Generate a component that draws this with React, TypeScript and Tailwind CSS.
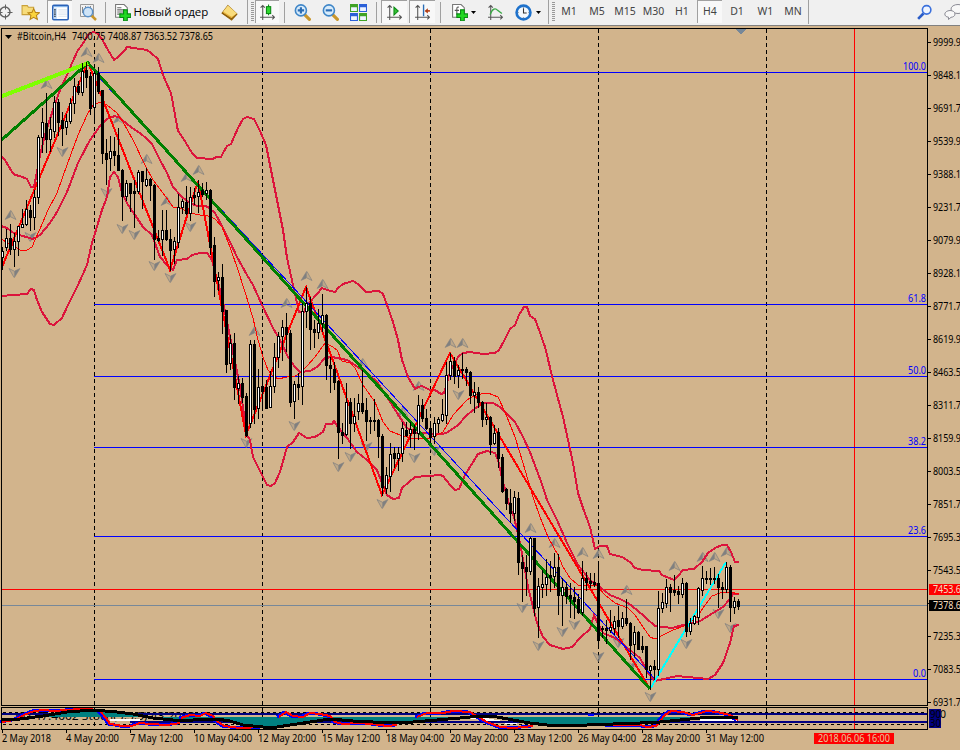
import type { ReactNode } from 'react';

// [high, body top, body bottom, low, bullish], one bar every 4px starting at x = 2
const bars: number[][] = [
  [247,251,257,269,1],[229,238,247,250,1],[224,238,249,254,0],[233,241,249,266,1],[226,226,241,255,1],
  [209,224,227,227,1],[200,209,224,225,1],[205,210,217,230,0],[190,197,217,229,1],[135,137,197,203,1],
  [108,122,137,152,1],[93,123,139,152,0],[117,129,139,151,1],[96,102,131,137,1],[99,102,122,135,0],
  [112,120,128,145,0],[114,121,127,134,1],[98,103,121,123,1],[78,86,103,113,1],[81,86,92,94,0],
  [63,71,92,95,1],[62,70,77,87,0],[72,76,108,114,0],[71,73,107,121,1],[67,73,91,93,0],
  [90,90,153,163,0],[139,153,159,184,0],[136,151,158,170,1],[137,151,155,165,0],[128,155,170,170,0],
  [169,170,196,220,0],[180,183,196,200,1],[183,183,193,211,0],[180,191,193,227,0],[170,172,191,193,1],
  [171,171,181,208,0],[168,179,185,186,1],[178,179,185,200,0],[184,185,239,259,0],[230,238,240,241,0],
  [210,230,239,255,1],[210,230,239,240,0],[229,239,250,270,0],[237,241,249,263,1],[194,207,242,247,1],
  [199,201,207,213,1],[186,202,213,214,0],[187,197,213,220,1],[188,195,197,204,0],[180,192,196,212,1],
  [183,190,194,196,0],[182,190,193,199,1],[189,190,247,254,0],[237,245,281,296,0],[272,277,280,290,1],
  [264,277,311,333,0],[310,310,364,372,0],[335,343,363,369,1],[333,343,387,399,0],[376,383,388,403,1],
  [378,383,397,402,0],[393,396,435,436,0],[340,344,423,427,1],[340,344,409,423,0],[369,387,408,418,1],
  [362,386,391,410,0],[380,387,408,408,0],[371,386,407,407,1],[343,357,386,392,1],[332,336,357,367,1],
  [320,327,336,360,1],[313,327,334,351,0],[330,333,402,406,0],[381,384,401,418,1],[373,384,387,399,0],
  [303,311,386,404,1],[287,303,311,327,1],[297,303,329,349,0],[320,329,332,347,0],[309,323,332,338,1],
  [294,315,323,331,1],[314,315,365,379,0],[357,365,368,392,0],[362,369,382,389,0],[380,381,432,458,0],
  [423,432,435,443,0],[383,402,434,435,1],[398,402,423,448,0],[398,416,423,431,1],[394,403,411,419,1],
  [370,403,411,413,0],[398,410,421,440,0],[417,420,421,433,0],[399,420,421,430,0],[419,420,436,457,0],
  [434,436,487,495,0],[467,475,488,493,1],[443,454,476,491,1],[447,453,458,467,0],[447,453,458,470,1],
  [422,428,453,461,1],[422,430,435,436,0],[422,429,433,447,1],[425,429,433,449,0],[395,405,433,439,1],
  [399,405,418,421,0],[409,418,428,429,0],[423,428,437,442,0],[417,423,436,443,1],[417,419,423,432,1],
  [399,414,420,421,1],[362,375,415,423,1],[353,361,375,379,1],[357,361,376,383,0],[365,370,375,387,1],
  [353,369,370,378,0],[367,369,372,385,0],[371,372,395,403,0],[382,392,395,412,1],[387,392,402,407,0],
  [401,402,419,426,0],[403,417,419,424,1],[416,417,444,454,0],[425,433,443,444,1],[428,432,458,467,0],
  [454,457,491,492,0],[488,489,503,509,0],[489,503,513,522,0],[491,497,513,520,1],[492,498,562,574,0],
  [555,562,568,601,0],[555,567,571,595,0],[537,538,571,574,1],[538,538,608,615,0],[578,586,607,637,1],
  [570,584,587,597,1],[559,577,584,595,1],[561,575,577,591,0],[553,567,576,587,1],[554,567,595,614,0],
  [578,587,595,625,1],[582,587,596,603,0],[583,595,598,617,0],[587,597,601,618,0],[594,599,612,613,0],
  [561,578,612,615,1],[572,578,582,590,0],[573,581,583,587,0],[573,582,584,586,0],[563,583,640,648,0],
  [626,628,629,637,0],[620,628,630,643,0],[610,627,630,632,1],[616,621,628,634,1],[606,620,626,637,0],
  [612,618,626,628,1],[599,618,623,625,0],[622,623,645,659,0],[626,632,644,656,1],[631,632,649,649,0],
  [636,646,649,652,0],[646,646,669,677,0],[665,666,670,689,1],[660,666,669,679,0],[591,608,669,675,1],
  [593,602,608,612,1],[579,587,603,607,1],[584,587,592,611,0],[575,590,592,595,0],[586,591,594,603,0],
  [578,583,594,597,1],[582,583,631,636,0],[618,623,631,634,1],[615,616,623,624,1],[587,588,617,624,1],
  [566,578,590,595,1],[571,578,579,583,0],[568,578,579,584,0],[567,578,579,583,0],[574,578,587,607,0],
  [582,587,589,598,0],[562,567,589,592,1],[565,567,607,621,0],[597,601,607,613,1],[599,601,606,609,0],
];

const upperBand = '0,155 5,160 12,172 15,175 20,176 27,179 31,187 34,187 36,177 40,155 46,131 54,107 60,90 68,73 72,63 78,50 82,45 88,35 93,32 97,33 102,39 108,50 114,60 118,57 125,50 127,47 134,48 147,50 151,53 158,59 163,75 166,82 171,93 175,115 178,131 183,138 192,153 197,158 213,159 216,157 221,157 223,153 227,146 231,144 238,128 243,119 247,117 254,119 260,131 266,145 275,190 283,230 287,258 293,285 299,312 304,312 307,305 310,302 317,294 322,288 327,290 335,292 338,288 343,284 353,281 358,284 366,292 379,291 383,294 387,305 393,322 398,340 402,360 408,377 415,389 418,387 422,386 430,390 435,390 441,394 444,393 450,372 458,357 463,353 470,352 483,354 495,353 499,350 504,341 510,329 515,325 519,315 524,307 527,307 530,316 535,319 538,327 545,347 553,380 563,417 573,463 578,493 583,508 590,527 595,549 600,546 607,546 610,554 622,557 630,562 635,568 643,570 659,571 662,575 674,580 678,576 683,570 694,569 702,562 708,553 715,548 722,545 727,545 731,552 735,562 739,562';
const middleBand = '1,226 7,228 12,232 22,236 27,237 32,239 35,238 40,235 50,223 57,212 67,192 78,163 90,140 100,126 107,119 115,116 120,118 127,124 135,130 140,133 147,139 152,144 160,160 167,173 173,187 182,197 190,203 197,206 205,206 208,207 215,213 223,228 230,242 237,257 247,275 253,285 262,305 273,328 280,340 288,357 295,367 300,372 310,371 317,367 325,358 332,357 347,360 358,367 367,373 377,382 387,397 397,413 407,428 415,433 443,434 448,432 458,425 467,415 477,407 485,403 493,403 500,407 515,422 523,437 530,452 543,487 547,500 557,520 567,543 578,565 590,580 600,587 610,595 620,599 628,603 637,610 645,617 655,626 672,628 683,625 700,621 713,613 723,607 730,599 733,594 739,594';
const lowerBand = '1,296 27,294 31,289 34,290 37,300 42,312 50,324 54,325 62,318 68,305 78,285 87,265 92,243 102,210 107,197 110,177 114,172 118,177 122,193 128,205 135,215 143,227 152,235 160,257 167,265 173,270 177,260 187,259 192,255 200,253 207,253 212,260 215,272 222,297 230,337 240,387 247,435 250,440 253,457 262,475 267,485 271,486 275,483 280,472 287,447 293,442 299,433 307,438 315,437 323,432 326,424 332,424 334,421 338,427 347,438 357,452 367,460 377,470 382,483 387,495 393,499 399,498 402,488 415,477 440,475 443,476 450,485 455,490 459,489 465,475 478,454 487,451 495,453 498,460 503,482 510,507 514,517 520,543 528,587 537,623 543,637 550,645 563,649 572,647 580,638 590,629 594,615 597,622 603,633 615,638 630,650 640,658 648,673 655,681 677,676 708,679 715,675 723,663 730,643 734,626 739,625';
const fastMa = '1,239 10,244 20,250 27,250 32,247 35,240 40,229 48,210 57,193 67,165 78,135 88,113 93,105 100,102 107,105 117,113 123,122 133,140 145,165 153,180 163,193 173,207 182,209 190,213 200,215 208,216 215,219 222,227 230,247 238,270 245,292 253,318 258,340 263,357 268,370 272,375 278,379 287,377 295,376 300,373 307,366 315,357 325,343 333,347 337,350 342,361 350,363 355,368 363,385 375,402 383,422 390,431 400,435 415,439 430,438 443,432 453,415 467,400 475,395 488,393 498,397 505,412 515,437 523,463 533,497 540,517 548,537 558,555 563,567 570,578 578,585 597,586 605,595 615,603 628,608 635,615 643,627 650,637 655,639 663,635 673,630 687,625 697,617 703,608 712,596 720,593 730,592 739,594';

const upFractals = [[46,79],[10,210],[86,47],[98,53],[118,114],[146,154],[166,196],[186,172],[198,165],[254,326],[286,298],[306,271],[322,279],[362,358],[402,407],[418,381],[450,338],[462,338],[530,523],[554,538],[582,547],[598,549],[626,585],[674,561],[702,552],[714,552],[726,547]];
const downFractals = [[62,157],[30,242],[14,278],[106,198],[122,234],[134,240],[154,271],[170,283],[190,232],[246,448],[294,431],[338,472],[350,462],[366,452],[382,509],[414,463],[434,456],[458,400],[522,613],[538,651],[562,637],[574,630],[598,662],[618,648],[631,671],[650,702],[686,649],[718,619],[730,633]];

const levels: [string, number][] = [['100.0', 72], ['61.8', 304], ['50.0', 376], ['38.2', 447], ['23.6', 536], ['0.0', 679]];
const prices = ['9999.9', '9848.1', '9691.7', '9539.9', '9388.1', '9231.7', '9079.9', '8928.1', '8771.7', '8619.9', '8463.5', '8311.7', '8159.9', '8003.5', '7851.7', '7695.3', '7543.5', '', '7235.3', '7083.5', '6931.7'];
const dates: [string, number][] = [['2 May 2018', 49], ['4 May 20:00', 53], ['7 May 12:00', 53], ['10 May 04:00', 58], ['12 May 20:00', 58], ['15 May 12:00', 58], ['18 May 04:00', 58], ['20 May 20:00', 58], ['23 May 12:00', 58], ['26 May 04:00', 58], ['28 May 20:00', 58], ['31 May 12:00', 58]];

const signal = '2,719 20,719 43,716 67,712 93,710 117,712 133,714 153,718 173,720 193,720 217,719 230,721 243,725 263,727 277,727 290,725 310,722 330,719 353,721 373,722 413,722 437,720 460,718 480,716 497,717 513,720 530,723 547,725 587,725 613,724 640,723 660,722 680,720 700,718 720,717 738,717';
const stoch = [
  '2,722 14,720 24,715 34,711 44,710 54,711 67,710 80,709 93,709',
  '100,711 106,718 110,724 117,725 122,726 132,726 140,723 150,724 167,725 180,723',
  '181,718 190,715 200,716 206,713 213,716 217,721 224,726 240,728 262,727',
  '279,717 286,712 293,716 303,717 310,713 320,714 330,716 335,722 343,724 357,723 373,724 387,726 397,725',
  '417,717 427,713 443,713 453,711 470,712 480,718 487,722 500,727 513,728 533,726',
  '607,725 625,725 640,725 647,727 656,726 665,715 671,711 683,712 693,715 707,711 717,712 730,715 738,720',
];

const font = '"Noto Sans", "DejaVu Sans", sans-serif';

function Label({ x, y, w, fill = '#000', children }: { x: number; y: number; w: number; fill?: string; children: string }) {
  return (
    <text x={x} y={y} textLength={w} lengthAdjust="spacingAndGlyphs" fill={fill} fontSize="11">{children}</text>
  );
}

function Chart() {
  return (
    <svg className="block" width="960" height="724" viewBox="0 26 960 724" fontFamily={font}>
      <g shapeRendering="crispEdges" fill="none">
        <g stroke="#000" strokeDasharray="4 3">
          {[94, 262, 430, 598, 766].map((x) => <path key={x} d={`M${x}.5 29V705M${x}.5 708V729`} />)}
        </g>
        <path d="M735 29h11l-5.500 5.500z" fill="#778899" />
        <path d="M2 605.500H927" stroke="#778899" />
        <path d="M2 589.500H927" stroke="#f00" />
        <path d="M854.500 29V705M854.500 708V729" stroke="#f00" />
        {levels.map(([name, y]) => <path key={name} d={`M94 ${y}.5H927`} stroke="#00f" />)}
      </g>

      <g fill="#808080" stroke="#808080">
        {upFractals.map(([x, y]) => (
          <g key={`${x}-${y}`} transform={`translate(${x + 0.5} ${y})`}>
            <path d="M0 .5L-5.500 9.500L0 7z" strokeWidth=".5" />
            <path d="M.5 .5L5.500 9.500L.5 7" fillOpacity=".25" strokeOpacity=".8" strokeWidth=".9" />
          </g>
        ))}
        {downFractals.map(([x, y]) => (
          <g key={`${x}-${y}`} transform={`translate(${x + 0.5} ${y})`}>
            <path d="M0 -.5L5.500 -9.500L0 -7z" strokeWidth=".5" />
            <path d="M-.5 -.5L-5.500 -9.500L-.5 -7" fillOpacity=".25" strokeOpacity=".8" strokeWidth=".9" />
          </g>
        ))}
      </g>

      <svg x="2" y="29" width="925" height="676" viewBox="2 29 925 676">
        <g shapeRendering="crispEdges" fill="none">
          <g stroke="#dc143c" strokeWidth="2">
            <polyline points={upperBand} />
            <polyline points={middleBand} />
            <polyline points={lowerBand} />
          </g>
          <polyline points={fastMa} stroke="#f00" />
          <polyline points="2,267 88,62 170,270 198,181 246,435 306,287 382,495 450,353 650,689" stroke="#f00" strokeWidth="2" />
          <path d="M650 689L726 562" stroke="#0ff" strokeWidth="2" />
          <path d="M94 72L655 679" stroke="#00f" />
          <path d="M1 140.500L88 63L650 689" stroke="#008000" strokeWidth="3" />
          <path d="M1 96.500L88 63" stroke="#7fff00" strokeWidth="4" />
        </g>
        <g shapeRendering="crispEdges">
          {bars.map(([high, top, bottom, low, up], i) => {
            const x = 2 + i * 4;
            return (
              <g key={i}>
                <rect x={x} y={high} width="1" height={low - high + 1} />
                <rect x={x - 1} y={top} width="3" height={bottom - top + 1} />
                {up === 1 && bottom - top > 1 && <rect x={x} y={top + 1} width="1" height={bottom - top - 1} fill="#fff" />}
              </g>
            );
          })}
        </g>
      </svg>

      {/* oscillator pane */}
      <Label x={15} y={720} w={180}>KU 47.4002  Stoch(5,3,3) 43.2012</Label>
      <g shapeRendering="crispEdges" fill="none">
        <path d="M110 719h30v2h-30zM468 718h18l34 6h-12z" fill="#fff" />
        <path d="M2 714H927M130 722H927" stroke="#000080" strokeWidth="2" />
        <path d="M3 712.500H927M3 724.500H927" stroke="#000" strokeDasharray="3 3" />
        <path d={`M${signal} 738,717 40,717z`} fill="#008080" />
        <path d="M700 719h38v2h-38z" fill="#fff" />
        {stoch.map((points) => (
          <g key={points}>
            <polyline points={points} stroke="#00f" strokeWidth="3" transform="translate(-2 0)" />
            <polyline points={points} stroke="#f00" strokeWidth="2" />
          </g>
        ))}
        <polyline points={signal} stroke="#000" strokeWidth="3" />
        <path d="M588 716h6v-2h-6z" fill="#00f" />
        <path d="M1.500 705.500V28.500H927.500V705.500zM1.500 729.500V707.500H927.500V729.500z" stroke="#000" />
        <path d={prices.map((_, i) => `M928 ${42.5 + i * 33}h3`).join('')} stroke="#000" />
        <path d={dates.map((_, i) => `M${2.5 + i * 64} 730v3`).join('')} stroke="#000" />
      </g>

      {levels.map(([name, y]) => {
        const w = name.length === 5 ? 23 : name.length === 4 ? 18 : 13;
        return <Label key={name} x={926 - w} y={y - 2} w={w} fill="#00f">{name}</Label>;
      })}
      {prices.map((price, i) => price && <Label key={price} x={933} y={46 + i * 33} w={28}>{price}</Label>)}
      <rect x="929" y="584" width="31" height="11" fill="#f00" />
      <Label x={933} y={593} w={28} fill="#f5dfc0">7453.6</Label>
      <rect x="929" y="600" width="31" height="11" />
      <Label x={933} y={609} w={28} fill="#f5dfc0">7378.6</Label>
      <Label x={928} y={718} w={18}>100</Label>
      <rect x="929" y="709" width="12" height="19" fill="#000080" />
      <Label x={930} y={718} w={11}>90</Label>
      <Label x={930} y={727} w={11}>30</Label>

      {dates.map(([date, w], i) => <Label key={date} x={2 + i * 64} y={742} w={w}>{date}</Label>)}
      <rect x="814" y="733" width="80" height="11" fill="#f00" />
      <Label x={818} y={742} w={72} fill="#e6c79c">2018.06.06 16:00</Label>

      <path d="M5 35h7l-3.500 4z" />
      <Label x={17} y={40} w={49}>#Bitcoin,H4</Label>
      <Label x={72} y={40} w={141}>7400.75 7408.87 7363.52 7378.65</Label>
    </svg>
  );
}

function Icon({ children }: { children: ReactNode }) {
  return <svg className="block shrink-0" width="17" height="17" viewBox="0 0 16 16" fill="none">{children}</svg>;
}

function Axes() {
  return <path d="M3.500 1v14M1 12.500h14M1.500 3.500l2-2 2 2M12.500 10.500l2 2-2 2" stroke="#555" />;
}

function Lens({ plus }: { plus?: boolean }) {
  return (
    <Icon>
      <path d="M10 10l4.500 4.500" stroke="#c9962b" strokeWidth="3" strokeLinecap="round" />
      <circle cx="6.500" cy="6" r="5.200" fill="#d8ecfb" stroke="#3f86c8" strokeWidth="1.500" />
      <path d={plus ? 'M3.500 6h6M6.500 3v6' : 'M3.500 6h6'} stroke="#2a6cb5" strokeWidth="2" />
    </Icon>
  );
}

function Plus() {
  return <path d="M9 5.500h3.500v3.800h3.200v3.400h-3.200v3H9v-3H5.500V9.300H9z" fill="#21d821" stroke="#0a8a14" />;
}

function Cell({ className, children }: { className: string; children?: ReactNode }) {
  return <div className={`flex h-full shrink-0 items-center justify-center ${className}`}>{children}</div>;
}

function Pressed({ children }: { children: ReactNode }) {
  return (
    <div className="mx-px flex h-[23px] grow items-center justify-center self-start border-t border-l border-[#a0a0a0] bg-[#f8f8f8]">
      {children}
    </div>
  );
}

function Separator({ className }: { className: string }) {
  return <Cell className={className}><div className="h-[21px] w-px bg-[#a0a0a0]" /></Cell>;
}

function Grip() {
  return (
    <Cell className="w-2 gap-[3px]">
      <div className="h-full w-px bg-[#a0a0a0]" />
      <div className="h-5 w-[3px] bg-[repeating-linear-gradient(#999_0_1px,#f0f0f0_1px_2px)]" />
    </Cell>
  );
}

function Caret() {
  return <svg width="5" height="3" viewBox="0 0 5 3"><path d="M0 0h5L2.500 3z" /></svg>;
}

function Toolbar() {
  const frame = 'h-full flex items-center justify-center shrink-0';
  return (
    <div className="flex h-[26px] w-[960px] overflow-hidden border-b border-[#808080] bg-[#f0f0f0] pb-px">
      <Cell className="w-[14px]">
        <svg className="-ml-[5px] shrink-0" width="16" height="16" viewBox="0 0 16 16" fill="none" stroke="#606060">
          <circle cx="8" cy="8" r="5" strokeWidth="1.400" />
          <path d="M8.500 .5v5M8.500 10.500v5M.5 8.500h5M10.500 8.500h5" />
        </svg>
      </Cell>
      <Cell className="w-8">
        <svg width="19" height="17" viewBox="0 0 18 16">
          <path d="M1 1.500h5l1 1.500h5v7H1z" fill="#f7dc7a" stroke="#c9a13a" />
          <path d="M12 4.500l1.700 3.400 3.800.4-2.900 2.500.9 3.700-3.500-1.900-3.400 1.900.8-3.700L6.600 8.300l3.700-.4z" fill="#fbd43c" stroke="#b98516" />
        </svg>
      </Cell>
      <div className={`${frame} w-[27px]`}>
        <Pressed>
          <Icon>
            <rect x=".75" y="1.250" width="14.500" height="13.500" rx="1" fill="#fff" stroke="#2a62b8" strokeWidth="1.500" />
            <path d="M1.500 2.500h13" stroke="#7bb0ea" />
            <path d="M1.500 4h3v10h-3z" fill="#b9d6f7" />
            <path d="M2 5.500h1.500M2 7.500h1.500M2 9.500h1.500M2 11.500h1.500" stroke="#222" />
            <path d="M6 5.500h8M6 7.500h8M6 9.500h8M6 11.500h8" stroke="#dde6f0" />
          </Icon>
        </Pressed>
      </div>
      <Cell className="w-[29px]">
        <svg width="18" height="18" viewBox="0 0 18 18" fill="none">
          <path d="M1.500 1.500h13v12h-13z" fill="#f2f2f2" stroke="#999" />
          <path d="M3.500 4v6M6.500 3v3M11.500 3v3" stroke="#888" />
          <path d="M12 12l5 5" stroke="#c9962b" strokeWidth="2.500" />
          <circle cx="9" cy="9" r="4.700" fill="#cfe4f7" stroke="#5a90c8" strokeWidth="1.500" />
        </svg>
      </Cell>
      <Separator className="w-[6px]" />
      <Cell className="w-[104px] gap-[3px] pl-[2px]">
        <Icon>
          <path d="M1.500.5h8l3 3v9h-11z" fill="#fff" stroke="#777" />
          <path d="M3 3.500h4M3 5.500h7M3 7.500h6M3 9.500h4" stroke="#666" />
          <Plus />
        </Icon>
        <span className="-mt-px w-[75px] font-['Open_Sans',sans-serif] text-[11.500px] leading-4 tracking-[-0.050px] whitespace-nowrap">Новый ордер</span>
      </Cell>
      <Cell className="w-[34px]">
        <Icon>
          <path d="M6.500 1.500L15 9.500 10 15 1 8.500z" fill="#e8b33c" stroke="#9a6a10" />
          <path d="M6.500 1.500L15 9l-5 3L2 7z" fill="#f9dc7c" />
          <path d="M1 8.500L10 14l5-4.500" stroke="#8a5c0a" />
        </Icon>
      </Cell>
      <Grip />
      <div className={`${frame} w-[26px]`}>
        <Pressed>
          <Icon>
            <Axes />
            <path d="M9 .5v10" stroke="#0a8a14" />
            <rect x="7" y="2.500" width="4" height="6.500" fill="#2fd62f" stroke="#0a8a14" />
          </Icon>
        </Pressed>
      </div>
      <Separator className="w-2" />
      <Cell className="w-7"><Lens plus /></Cell>
      <Cell className="w-7"><Lens /></Cell>
      <Cell className="w-7">
        <Icon>
          <path d="M0 0h7.500v7.500H0zM8.500 8.500H16V16H8.500z" fill="#3fa324" />
          <path d="M8.500 0H16v7.500H8.500zM0 8.500h7.500V16H0z" fill="#2b60d8" />
          <path d="M1 3h5.500v3.500H1zM9.500 3H15v3.500H9.500zM1 11.500h5.500V15H1zM9.500 11.500H15V15H9.500z" fill="#eef4ff" />
        </Icon>
      </Cell>
      <Separator className="w-2" />
      <div className={`${frame} w-7`}>
        <Pressed><Icon><Axes /><path d="M7.500 3l4 3.700-4 3.700z" fill="#35c235" stroke="#0a8a14" /></Icon></Pressed>
      </div>
      <div className={`${frame} w-7`}>
        <Pressed>
          <Icon>
            <Axes />
            <path d="M9 .5v11" stroke="#2a6cb5" strokeWidth="1.300" />
            <path d="M15 6.500h-4" stroke="#b03a10" strokeWidth="1.500" />
            <path d="M10 6.500l3-2.500v5z" fill="#b03a10" />
          </Icon>
        </Pressed>
      </div>
      <Separator className="w-2" />
      <Cell className="w-[26px] pl-1">
        <Icon>
          <path d="M1.500.5h8l3 3v9h-11z" fill="#fff" stroke="#777" />
          <path d="M7.500 3c-2-.5-2 .5-2 2v5M3.500 6h4" stroke="#555" />
          <Plus />
        </Icon>
      </Cell>
      <Cell className="w-[7px]"><Caret /></Cell>
      <Cell className="w-[37px]">
        <Icon><Axes /><path d="M3 10c2-6 5-6.500 7-4l4 3" stroke="#3aa845" strokeWidth="1.300" /></Icon>
      </Cell>
      <Cell className="w-[18px]">
        <Icon>
          <circle cx="8" cy="8" r="6.500" fill="#f4f9fd" stroke="#1e72cc" strokeWidth="2.500" />
          <path d="M8 4v4.500h3" stroke="#333" />
          <path d="M8 2.500v1M8 12.500v1M2.500 8h1M12.500 8h1" stroke="#7a8aa0" />
        </Icon>
      </Cell>
      <Cell className="w-[12px]"><Caret /></Cell>
      <Cell className="w-[3px]" />
      <Grip />
      <div className="flex h-full font-['Noto_Sans','DejaVu_Sans',sans-serif] text-[10.500px] text-[#444]">
        <Cell className="w-7">M1</Cell>
        <Cell className="w-7">M5</Cell>
        <Cell className="w-7">M15</Cell>
        <Cell className="w-[29px]">M30</Cell>
        <Cell className="w-7">H1</Cell>
        <div className={`${frame} w-[27px]`}><Pressed>H4</Pressed></div>
        <Cell className="w-7">D1</Cell>
        <Cell className="w-[29px]">W1</Cell>
        <Cell className="w-[26px]">MN</Cell>
      </div>
      <Cell className="w-1"><div className="h-full w-px bg-[#a0a0a0]" /></Cell>
      <div className="grow" />
      <Cell className="w-4">
        <Icon>
          <path d="M2 14l5-5" stroke="#2a5cc8" strokeWidth="2.500" />
          <circle cx="10" cy="5.500" r="4" fill="#eef4ff" stroke="#3a70dc" strokeWidth="1.500" />
        </Icon>
      </Cell>
      <Cell className="w-[28px] justify-end">
        <svg width="16" height="16" viewBox="0 0 16 16" fill="#f8f8f8" stroke="#8a8a94">
          <ellipse cx="14" cy="5" rx="7" ry="4.500" />
          <path d="M6 6.500c3 0 5 1.500 5 3.500s-2 3.200-4 3.300L4.500 15.500v-2.300C2 13 .8 11.500.8 10S3 6.500 6 6.500z" />
        </svg>
      </Cell>
    </div>
  );
}

export default function App() {
  return (
    <div className="flex h-[750px] w-[960px] flex-col overflow-hidden bg-[#d2b48c]">
      <Toolbar />
      <Chart />
    </div>
  );
}
